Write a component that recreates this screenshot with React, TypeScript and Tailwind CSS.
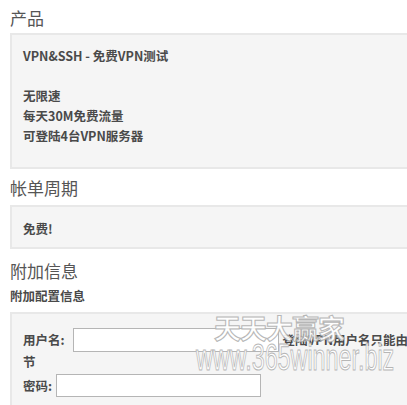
import React from "react";

const font = "font-['Noto_Sans_CJK_SC','Noto_Sans',sans-serif]";

export default function App() {
  return (
    <div className={`relative w-[407px] h-[405px] overflow-hidden bg-white ${font} text-[#555]`}>
      <div className="pl-[10px] w-[480px]">
        <h2 className="text-[17px] leading-[20px] pt-[8px] pb-[5px] text-[#555]">产品</h2>
        <div className="border-2 border-[#e8e8e8] bg-[#f5f5f5] pl-[11px] pt-[11px] pb-[21px] text-[12.5px] font-bold leading-[20px] text-[#4a4a4a]">
          <div>VPN&amp;SSH - 免费VPN测试</div>
          <div>&nbsp;</div>
          <div>无限速</div>
          <div>每天30M免费流量</div>
          <div>可登陆4台VPN服务器</div>
        </div>
        <h2 className="text-[17px] leading-[20px] pt-[9px] pb-[7px] text-[#555]">帐单周期</h2>
        <div className="border-2 border-[#e8e8e8] bg-[#f5f5f5] pl-[11px] pt-[12px] pb-[8px] text-[12.5px] font-bold leading-[20px] text-[#4a4a4a]">
          <div>免费!</div>
        </div>
        <h2 className="text-[17px] leading-[20px] pt-[12px] pb-[5px] text-[#555]">附加信息</h2>
        <div className="text-[12.5px] font-bold leading-[20px] text-[#4a4a4a]">附加配置信息</div>
        <div className="mt-[6px] border-2 border-[#e8e8e8] bg-[#f5f5f5] pl-[11px] pt-[14px] pb-[12px] text-[12.5px] font-bold leading-[20px] text-[#4a4a4a]">
          <div className="flex items-center whitespace-nowrap">
            <span>用户名:</span>
            <div className="ml-[8px] w-[206px] h-[24px] bg-white border border-[#b5b5b5]" />
            <span className="ml-[4px]">登陆VPN用户名只能由字母</span>
          </div>
          <div className="mt-[0px]">节</div>
          <div className="flex items-center mt-[2px]">
            <span>密码:</span>
            <div className="ml-[4px] w-[205px] h-[23px] bg-white border border-[#b5b5b5]" />
          </div>
        </div>
      </div>
      <div className="absolute left-[214px] top-[313px] text-[27px] leading-[30px] tracking-[-1px] text-white font-bold [-webkit-text-stroke:1px_#b0b0b0] opacity-90 pointer-events-none">
        天天大赢家
      </div>
      <div className="absolute left-[196px] top-[338px] origin-left scale-x-[0.63] text-[37px] leading-[40px] text-white font-['Liberation_Sans',sans-serif] [-webkit-text-stroke:1px_#b0b0b0] opacity-90 pointer-events-none whitespace-nowrap">
        www.365winner.biz
      </div>
    </div>
  );
}
